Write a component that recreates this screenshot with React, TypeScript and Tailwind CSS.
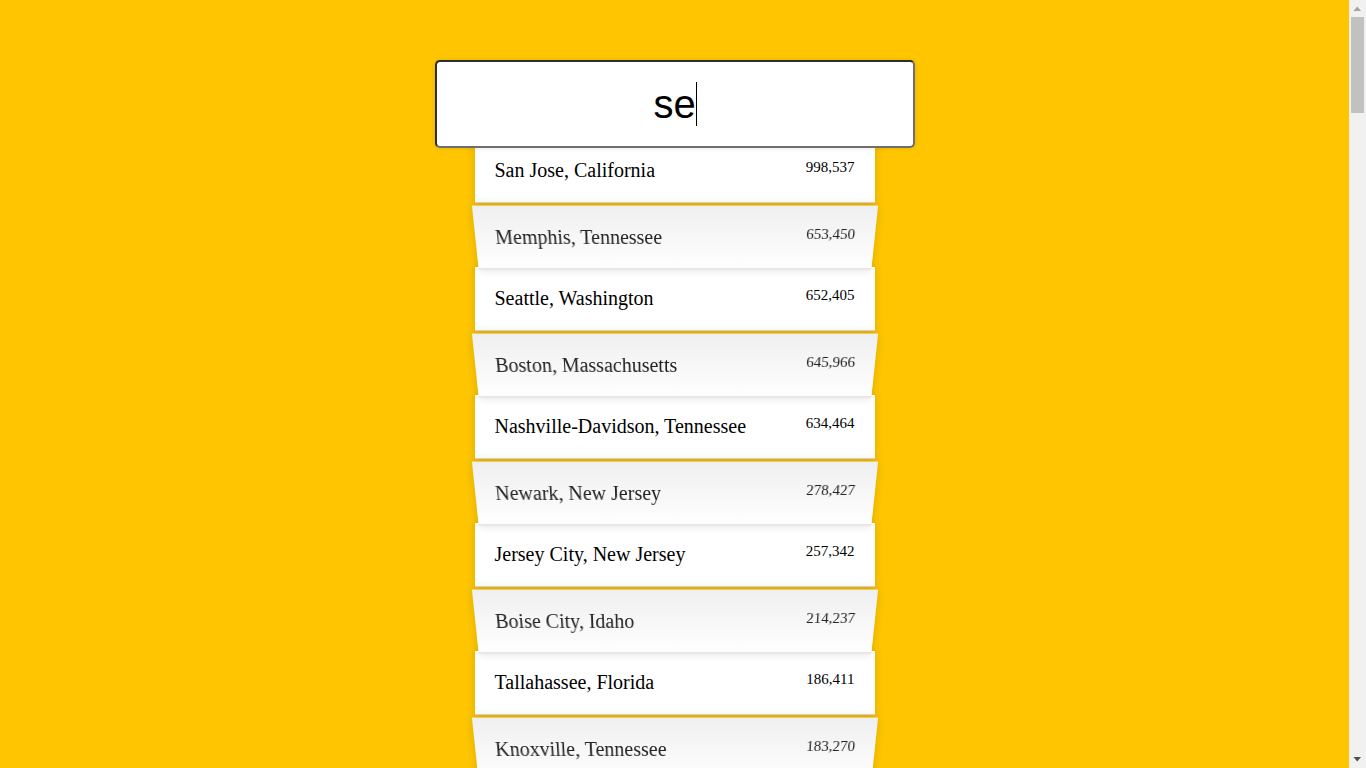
import React from "react";

const cities: [string, string][] = [
  ["San Jose, California", "998,537"],
  ["Memphis, Tennessee", "653,450"],
  ["Seattle, Washington", "652,405"],
  ["Boston, Massachusetts", "645,966"],
  ["Nashville-Davidson, Tennessee", "634,464"],
  ["Newark, New Jersey", "278,427"],
  ["Jersey City, New Jersey", "257,342"],
  ["Boise City, Idaho", "214,237"],
  ["Tallahassee, Florida", "186,411"],
  ["Knoxville, Tennessee", "183,270"],
  ["Worcester, Massachusetts", "182,544"],
  ["Chattanooga, Tennessee", "173,366"],
  ["Springfield, Massachusetts", "153,703"],
  ["Paterson, New Jersey", "145,948"],
  ["Syracuse, New York", "144,669"],
  ["Clarksville, Tennessee", "142,357"],
  ["Elizabeth, New Jersey", "127,558"],
  ["Roseville, California", "124,519"],
  ["Murfreesboro, Tennessee", "117,044"],
  ["Lowell, Massachusetts", "108,861"],
];

export default function App() {
  return (
    <div className="h-screen flex overflow-hidden bg-[#ffc600] font-['Liberation_Serif',serif] text-[20px] text-black">
      <main className="flex-1 min-w-0 overflow-hidden flow-root">
        <form className="max-w-[400px] mx-auto my-[50px]" onSubmit={(e) => e.preventDefault()}>
          <div className="relative top-[10px] left-[-10%] z-10 w-[120%] h-[88px] box-border rounded-[5px] border-2 border-t-[#2e2e2e] border-l-[#2e2e2e] border-r-[#6e6e6e] border-b-[#6e6e6e] bg-white shadow-[0_0_5px_rgba(0,0,0,0.12)] flex items-center justify-center font-['Liberation_Sans',Arial,sans-serif] text-[40px] leading-[46px]">
            <span>se</span>
            <span className="inline-block w-px h-[44px] bg-black mr-[-1px]" />
          </div>
          <ul className="m-0 mt-px p-0 relative">
            {cities.map(([name, pop], i) => {
              const even = i % 2 === 1;
              return (
                <li
                  key={name}
                  className={
                    even
                      ? "flex justify-between p-5 leading-[23px] border-b border-[#D8D8D8] shadow-[0_0_10px_rgba(0,0,0,0.14)] bg-linear-to-b from-[#EFEFEF] to-white text-[#222] [transform:perspective(100px)_rotateX(-3deg)_translateY(3px)]"
                      : "flex justify-between p-5 leading-[23px] border-b border-[#D8D8D8] shadow-[0_0_10px_rgba(0,0,0,0.14)] bg-white"
                  }
                >
                  <span>{name}</span>
                  <span className="text-[15px] leading-[17px]">{pop}</span>
                </li>
              );
            })}
          </ul>
        </form>
      </main>
      <div className="w-[17px] shrink-0 bg-[#f1f1f1] flex flex-col">
        <svg width="17" height="17" viewBox="0 0 17 17" className="shrink-0">
          <polygon points="4.5,11 12,11 8.25,6.5" fill="#a3a3a3" />
        </svg>
        <div className="flex-1 px-[2px]">
          <div className="h-[96px] bg-[#c1c1c1]" />
        </div>
        <svg width="17" height="17" viewBox="0 0 17 17" className="shrink-0">
          <polygon points="4.5,6 12,6 8.25,10.5" fill="#505050" />
        </svg>
      </div>
    </div>
  );
}
